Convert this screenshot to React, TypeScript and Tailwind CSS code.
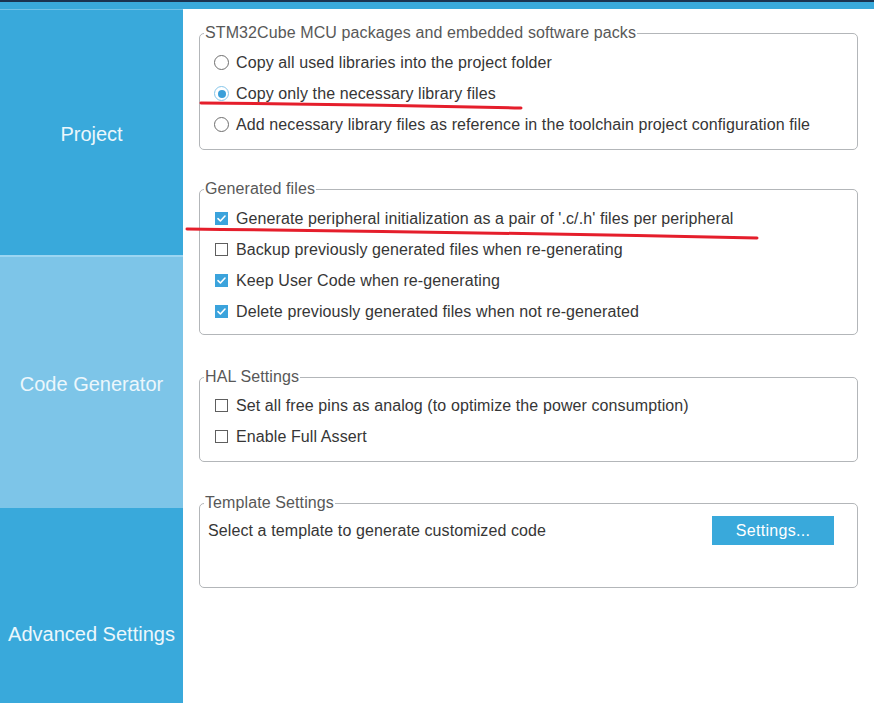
import React from "react";

type Item = { label: string; checked?: boolean };

const Radio = ({ selected }: { selected?: boolean }) => (
  <div className="w-[15px] h-[15px] flex items-center justify-center shrink-0">
    {selected ? (
      <div className="w-[15px] h-[15px] rounded-full border border-[#86c6ea] bg-white flex items-center justify-center">
        <div className="w-[8px] h-[8px] rounded-full bg-[#3a9fd9]" />
      </div>
    ) : (
      <div className="w-[15px] h-[15px] rounded-full border border-[#6e6e6e] bg-white" />
    )}
  </div>
);

const Checkbox = ({ checked }: { checked?: boolean }) => (
  <div className="w-[15px] h-[15px] flex items-center justify-center shrink-0">
    {checked ? (
      <div className="w-[13px] h-[13px] bg-[#3ba3dc] flex items-center justify-center">
        <svg width="11" height="11" viewBox="0 0 11 11" fill="none">
          <path d="M2 5.6 L4.4 8 L9 3" stroke="#ffffff" strokeWidth="1.6" strokeLinecap="round" strokeLinejoin="round" />
        </svg>
      </div>
    ) : (
      <div className="w-[13px] h-[13px] border border-[#5e5e5e] bg-white" />
    )}
  </div>
);

const GroupBox = ({
  title,
  className,
  children,
}: {
  title: string;
  className: string;
  children: React.ReactNode;
}) => (
  <div className={`relative border border-[#b3b6b9] rounded-[5px] ${className}`}>
    <span className="absolute top-[-10px] left-[4px] bg-white px-[1px] leading-[18px] text-[16px] text-[#585858] whitespace-nowrap">
      {title}
    </span>
    {children}
  </div>
);

const packOptions: Item[] = [
  { label: "Copy all used libraries into the project folder" },
  { label: "Copy only the necessary library files", checked: true },
  { label: "Add necessary library files as reference in the toolchain project configuration file" },
];

const generatedOptions: Item[] = [
  { label: "Generate peripheral initialization as a pair of '.c/.h' files per peripheral", checked: true },
  { label: "Backup previously generated files when re-generating" },
  { label: "Keep User Code when re-generating", checked: true },
  { label: "Delete previously generated files when not re-generated", checked: true },
];

const halOptions: Item[] = [
  { label: "Set all free pins as analog (to optimize the power consumption)" },
  { label: "Enable Full Assert" },
];

export default function App() {
  return (
    <div className="relative w-[874px] h-[703px] overflow-hidden bg-white font-['Liberation_Sans',Arial,sans-serif]">
      <div className="h-[2px] bg-[#1b3350]" />
      <div className="h-[7px] bg-[#39a9db]" />
      <div className="flex">
        {/* side tabs */}
        <aside className="w-[183px] shrink-0 flex flex-col text-[20px] text-[#ecf7fc]">
          <div className="h-[246px] bg-[#39a9db] border-t border-[#71c2e8] flex items-center justify-center pt-[2px]">
            Project
          </div>
          <div className="h-[2px] bg-[#9cd6f2]" />
          <div className="h-[251px] bg-[#7dc5e8] flex items-center justify-center pt-[2px]">
            Code Generator
          </div>
          <div className="h-[252px] bg-[#39a9db] flex items-center justify-center">
            Advanced Settings
          </div>
        </aside>

        <main className="flex-1 px-4 pt-[24px] text-[16px] tracking-[0.1px] text-[#363636]">
          <GroupBox title="STM32Cube MCU packages and embedded software packs" className="h-[117px] pt-[13px]">
            {packOptions.map((o) => (
              <div key={o.label} className="h-[31px] flex items-center gap-[7px] pl-[14px]">
                <Radio selected={o.checked} />
                <span className="whitespace-nowrap">{o.label}</span>
              </div>
            ))}
          </GroupBox>

          <GroupBox title="Generated files" className="mt-[39px] h-[146px] pt-[13px]">
            {generatedOptions.map((o) => (
              <div key={o.label} className="h-[31px] flex items-center gap-[7px] pl-[14px]">
                <Checkbox checked={o.checked} />
                <span className="whitespace-nowrap">{o.label}</span>
              </div>
            ))}
          </GroupBox>

          <GroupBox title="HAL Settings" className="mt-[42px] h-[85px] pt-[12px]">
            {halOptions.map((o) => (
              <div key={o.label} className="h-[31px] flex items-center gap-[7px] pl-[14px]">
                <Checkbox checked={o.checked} />
                <span className="whitespace-nowrap">{o.label}</span>
              </div>
            ))}
          </GroupBox>

          <GroupBox title="Template Settings" className="mt-[41px] h-[85px] pt-[12px]">
            <div className="flex items-center justify-between pl-[8px] pr-[23px]">
              <span>Select a template to generate customized code</span>
              <button className="w-[122px] h-[29px] bg-[#39a9db] text-white text-[16px] tracking-[0.3px]">
                Settings...
              </button>
            </div>
          </GroupBox>
        </main>
      </div>

      {/* hand-drawn red annotations */}
      <svg className="absolute inset-0 pointer-events-none" width="874" height="703">
        <path d="M201 103 Q360 104 521 108" stroke="#e51e2b" strokeWidth="3" fill="none" strokeLinecap="round" />
        <path d="M187 229 Q470 232 757 238" stroke="#e51e2b" strokeWidth="3" fill="none" strokeLinecap="round" />
      </svg>
    </div>
  );
}
